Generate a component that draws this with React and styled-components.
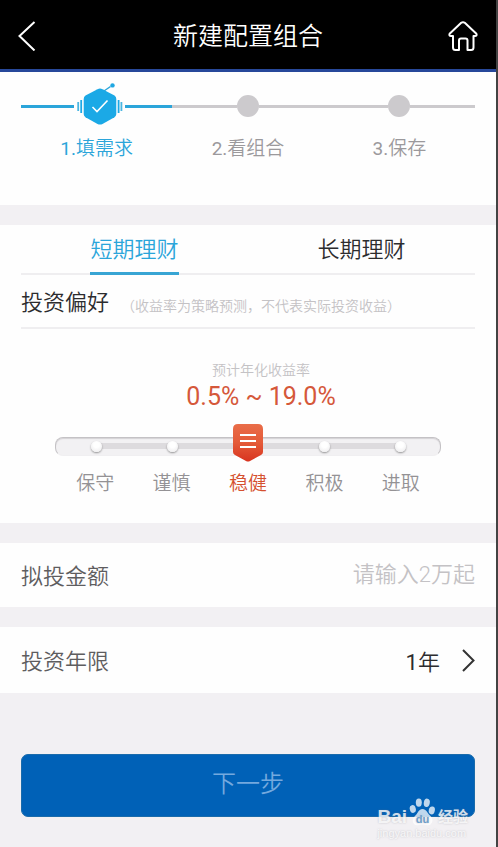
import React, { useState } from 'react';
import styled, { createGlobalStyle } from 'styled-components';

const GlobalStyle = createGlobalStyle`
  * {
    box-sizing: border-box;
  }

  body {
    margin: 0;
    background: #f2f0f3;
    font-family: Roboto, 'Noto Sans CJK SC', sans-serif;
    font-weight: 350;
    color: #333;
  }

  button,
  input {
    font-family: inherit;
    font-weight: inherit;
  }
`;

const Page = styled.div`
  position: relative;
  min-height: 100vh;
  display: flex;
  flex-direction: column;
  gap: 20px;
  border-right: 2px solid #434343;
`;

const Top = styled.div`
  background: #fefefe;
`;

const Header = styled.header`
  display: grid;
  grid-template-columns: 56px 1fr 56px;
  align-items: center;
  height: 72px;
  background: #000;
  border-bottom: 3px solid #27489a;
`;

const Title = styled.h1`
  margin: 0;
  padding-top: 4px;
  color: #fff;
  font-size: 25px;
  line-height: 32px;
  font-weight: 350;
  text-align: center;
`;

const IconButton = styled.button`
  display: flex;
  justify-content: ${(props) => (props.$end ? 'flex-end' : 'flex-start')};
  padding: ${(props) => (props.$end ? '3px 18px 0 0' : '3px 0 0 18px')};
  border: none;
  background: none;
  cursor: pointer;
`;

const Steps = styled.ol`
  display: grid;
  grid-template-columns: repeat(3, 1fr);
  margin: 0;
  padding: 11px 21px 44px;
  list-style: none;
`;

const Step = styled.li`
  display: flex;
  flex-direction: column;
  gap: 8px;
  color: ${(props) => (props.$active ? '#2ba5da' : '#9b999c')};
  font-size: 19px;
  line-height: 24px;
  text-align: center;
`;

const Digits = styled.span`
  font-weight: 400;
`;

const Marker = styled.div`
  display: flex;
  align-items: center;
  height: 46px;
`;

const Line = styled.span`
  flex: ${(props) => props.$grow || 1};
  height: 3px;
  background: ${(props) => (props.$active ? '#2ba5da' : '#cccacd')};
`;

const Dot = styled.span`
  width: 22px;
  height: 22px;
  border-radius: 50%;
  background: #cccacd;
`;

const Card = styled.section`
  background: #fefefe;
`;

const Tabs = styled.div`
  display: grid;
  grid-template-columns: 1fr 1fr;
  justify-items: center;
  height: 50px;
  margin: 0 21px;
  border-bottom: 2px solid #efeef0;
`;

const Tab = styled.button`
  height: 50px;
  padding: 0 0 4px;
  border: none;
  border-bottom: 3px solid ${(props) => (props.$active ? '#38a5d4' : 'transparent')};
  background: none;
  color: ${(props) => (props.$active ? '#2ba5da' : '#2c2c2e')};
  font-size: 22px;
  cursor: pointer;
`;

const Preference = styled.div`
  display: flex;
  align-items: center;
  gap: 12px;
  height: 54px;
  margin: 0 21px;
  padding-top: 4px;
  border-bottom: 2px solid #efeef0;
`;

const SectionTitle = styled.h2`
  margin: 0;
  color: #2c2c2e;
  font-size: 22px;
  line-height: 32px;
  font-weight: 350;
`;

const Note = styled.small`
  padding-top: 6px;
  color: #c4c2c5;
  font-size: 14px;
  line-height: 20px;
  white-space: nowrap;
`;

const Risk = styled.div`
  padding: 31px 55px 27px;
  text-align: center;
`;

const Readout = styled.div`
  padding-left: 26px;
`;

const RateLabel = styled.div`
  color: #c4c2c5;
  font-size: 14px;
  line-height: 20px;
`;

const Rate = styled.div`
  color: #d5583a;
  font-size: 25px;
  line-height: 34px;
  font-weight: 400;
`;

const Slider = styled.div`
  display: grid;
  align-items: center;
  margin: 9px 0 9px;

  > * {
    grid-area: 1 / 1;
  }
`;

const Track = styled.div`
  display: grid;
  grid-template-columns: repeat(5, 1fr);
  align-items: center;
  justify-items: center;
  height: 19px;
  margin-top: 6px;
  padding: 0 2px;
  border: 1px solid #c4c2c5;
  border-bottom-color: #f0eff1;
  border-radius: 8px;
  background: linear-gradient(#dddbde, #dddbde) center / calc(100% - 80px) 6px no-repeat,
    #f2f1f3;
  box-shadow: inset 0 1px 1px #d4d2d5;
`;

const Stop = styled.span`
  width: 11px;
  height: 11px;
  border-radius: 50%;
  background: radial-gradient(circle at 50% 35%, #fff 30%, #e9e8ea);
  box-shadow: 0 1px 2px rgba(0, 0, 0, 0.4);
`;

const Range = styled.input`
  appearance: none;
  height: 40px;
  margin: 0 25px;
  background: none;
  cursor: pointer;

  &::-webkit-slider-runnable-track {
    height: 38px;
  }

  &::-webkit-slider-thumb {
    appearance: none;
    width: 30px;
    height: 38px;
    border: none;
    border-radius: 0;
    clip-path: path('M5 0H25Q30 0 30 5V28Q30 30 28 31L17 37Q15 38 13 37L2 31Q0 30 0 28V5Q0 0 5 0Z');
    background: linear-gradient(#fff, #fff) 50% 10px / 16px 2px no-repeat,
      linear-gradient(#fff, #fff) 50% 16px / 16px 2px no-repeat,
      linear-gradient(#fff, #fff) 50% 22px / 16px 2px no-repeat,
      linear-gradient(#e96d49, #e45a38 50%, #d8331f);
  }
`;

const Levels = styled.div`
  display: grid;
  grid-template-columns: repeat(5, 1fr);
  padding: 0 2px;
`;

const Level = styled.span`
  color: ${(props) => (props.$active ? '#d5502f' : '#949295')};
  font-size: 19px;
  line-height: 24px;
`;

const Field = styled.label`
  display: flex;
  align-items: center;
  justify-content: space-between;
  height: 64px;
  padding: 0 21px 2px;
  background: #fefefe;
  color: #5e5d5f;
  font-size: 22px;
  white-space: nowrap;
`;

const Amount = styled.input`
  flex: 1;
  min-width: 0;
  padding: 0;
  border: none;
  outline: none;
  background: none;
  color: #333;
  font-size: 22px;
  text-align: right;

  &::placeholder {
    color: #c4c2c5;
  }
`;

const Picker = styled.button`
  display: flex;
  align-items: center;
  justify-content: space-between;
  height: 66px;
  padding: 0 21px 2px;
  border: none;
  background: #fefefe;
  color: #5e5d5f;
  font-size: 22px;
  cursor: pointer;
`;

const PickerValue = styled.span`
  display: flex;
  align-items: center;
  gap: 22px;
  padding-top: 2px;
  color: #2c2c2e;
`;

const Next = styled.button`
  height: 63px;
  margin: 41px 21px 30px;
  padding: 0 0 8px;
  border: 1px solid #1a6bab;
  border-radius: 7px;
  background: #0061b7;
  color: #74a9de;
  font-size: 24px;
  cursor: pointer;
`;

// sits over the bottom right corner of the page
const Watermark = styled.div`
  position: absolute;
  right: 28px;
  bottom: 7px;
  color: rgba(255, 255, 255, 0.8);
  pointer-events: none;
`;

const Brand = styled.div`
  display: flex;
  align-items: flex-end;
  gap: 2px;
  font-size: 15px;
  line-height: 18px;
  font-weight: 700;
  text-shadow: 0 0 2px rgba(120, 120, 130, 0.4);
`;

const BrandLatin = styled.span`
  font-family: 'Liberation Sans', Arial, sans-serif;
  font-size: 19px;
`;

const Site = styled.div`
  font-family: 'Liberation Sans', Arial, sans-serif;
  font-size: 11px;
  line-height: 14px;
  text-shadow: 0 0 2px rgba(120, 120, 130, 0.4);
`;

const BackIcon = () => (
  <svg width="18" height="30" viewBox="0 0 18 30" fill="none" stroke="#fff" strokeWidth="2">
    <path d="M16.5 1L1.5 15L16.5 29.5" />
  </svg>
);

const HomeIcon = () => (
  <svg width="30" height="30" viewBox="0 0 30 30" fill="none" stroke="#fff" strokeWidth="2" strokeLinejoin="round">
    <path d="M13.2 1.8Q15 .5 16.8 1.8L28.4 12.8Q29.2 15 27 15H25.5V26.5Q25.5 29 23 29H19.5V19.5Q19.5 17.5 17.5 17.5H13Q11 17.5 11 19.5V29H7.5Q5 29 5 26.5V15H3Q.8 15 1.6 12.8Z" />
  </svg>
);

const RobotIcon = () => (
  <svg width="51" height="46" viewBox="0 0 51 46" fill="none">
    <path d="M30 8L36.5 3.5" stroke="#2ba5da" strokeWidth="1.5" />
    <circle cx="38.5" cy="2.4" r="2.2" fill="#1fa7e2" />
    <path d="M23.5 6.2Q26 5 28.5 6.2L40.5 12.6Q42.3 13.8 42.3 16V31Q42.3 33 40.5 34.2L28.5 41Q26 42.2 23.5 41L11.5 34.2Q9.7 33 9.7 31V16Q9.7 13.8 11.5 12.6Z" fill="#1ba9e6" />
    <path d="M18.5 24L23 28.5L33.5 17.5" stroke="#fff" strokeWidth="1.6" />
    <path d="M7.2 17V30M44.6 17V30" stroke="#1ba9e6" strokeWidth="1.8" />
    <path d="M4.2 19V28M47.4 19V28" stroke="#4ab6e2" strokeWidth="1.8" />
  </svg>
);

const ChevronIcon = () => (
  <svg width="13" height="24" viewBox="0 0 13 24" fill="none" stroke="#333" strokeWidth="2">
    <path d="M1 2L11.5 12.5L1 23" />
  </svg>
);

const PawIcon = () => (
  <svg width="27" height="28" viewBox="0 0 27 28" fill="#fff" fillOpacity="0.75">
    <ellipse cx="3.8" cy="11" rx="3" ry="4" transform="rotate(-15 3.8 11)" />
    <ellipse cx="9.8" cy="4.6" rx="3" ry="4.2" />
    <ellipse cx="17.8" cy="4.8" rx="3" ry="4.2" transform="rotate(10 17.8 4.8)" />
    <ellipse cx="22.8" cy="12.4" rx="3" ry="4" transform="rotate(15 22.8 12.4)" />
    <path d="M13.5 11Q16.5 11 18.5 14.5Q19.5 16.2 21.5 18Q24.5 21 23 24.5Q21.5 28 17 27Q13.5 26.2 10 27Q5.5 28 4 24.5Q2.8 21 6 18Q7.8 16.4 8.7 14.5Q10.5 11 13.5 11Z" />
    <text x="13.5" y="25" textAnchor="middle" fontFamily="Liberation Sans, sans-serif" fontSize="11" fontWeight="700" fill="#6f9fcb" fillOpacity="1">
      du
    </text>
  </svg>
);

const levels = ['保守', '谨慎', '稳健', '积极', '进取'];
const tabs = ['短期理财', '长期理财'];

const App = () => {
  const [tab, setTab] = useState(0);
  const [level, setLevel] = useState(2);
  const [amount, setAmount] = useState('');

  return (
    <>
      <GlobalStyle />
      <Page>
        <Top>
          <Header>
            <IconButton type="button" aria-label="返回">
              <BackIcon />
            </IconButton>
            <Title>新建配置组合</Title>
            <IconButton type="button" aria-label="首页" $end>
              <HomeIcon />
            </IconButton>
          </Header>
          <Steps>
            <Step $active>
              <Marker>
                <Line $active $grow={9} />
                <RobotIcon />
                <Line $active $grow={8} />
              </Marker>
              <div><Digits>1.</Digits>填需求</div>
            </Step>
            <Step>
              <Marker>
                <Line />
                <Dot />
                <Line />
              </Marker>
              <div><Digits>2.</Digits>看组合</div>
            </Step>
            <Step>
              <Marker>
                <Line />
                <Dot />
                <Line />
              </Marker>
              <div><Digits>3.</Digits>保存</div>
            </Step>
          </Steps>
        </Top>

        <Card>
          <Tabs role="tablist">
            {tabs.map((name, i) => (
              <Tab key={name} type="button" role="tab" aria-selected={i === tab} $active={i === tab} onClick={() => setTab(i)}>
                {name}
              </Tab>
            ))}
          </Tabs>
          <Preference>
            <SectionTitle>投资偏好</SectionTitle>
            <Note>（收益率为策略预测，不代表实际投资收益）</Note>
          </Preference>
          <Risk>
            <Readout>
              <RateLabel>预计年化收益率</RateLabel>
              <Rate>0.5% ~ 19.0%</Rate>
            </Readout>
            <Slider>
              <Track>
                {levels.map((name) => (
                  <Stop key={name} />
                ))}
              </Track>
              <Range
                type="range"
                min="0"
                max="4"
                value={level}
                aria-label="投资偏好"
                aria-valuetext={levels[level]}
                onChange={(e) => setLevel(Number(e.target.value))}
              />
            </Slider>
            <Levels>
              {levels.map((name, i) => (
                <Level key={name} $active={i === level}>{name}</Level>
              ))}
            </Levels>
          </Risk>
        </Card>

        <Field>
          拟投金额
          <Amount type="text" inputMode="decimal" placeholder="请输入2万起" value={amount} onChange={(e) => setAmount(e.target.value)} />
        </Field>

        <Picker type="button">
          投资年限
          <PickerValue>
            <span><Digits>1</Digits>年</span>
            <ChevronIcon />
          </PickerValue>
        </Picker>

        <Next type="button">下一步</Next>

        <Watermark>
          <Brand>
            <BrandLatin>Bai</BrandLatin>
            <PawIcon />
            经验
          </Brand>
          <Site>jingyan.baidu.com</Site>
        </Watermark>
      </Page>
    </>
  );
};

export default App;
